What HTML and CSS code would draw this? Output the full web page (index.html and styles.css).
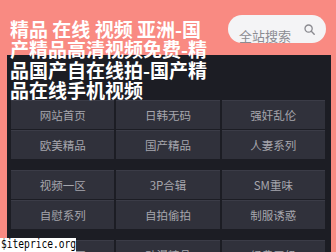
FILE: index.html
```html
<!DOCTYPE html>
<html lang="zh">
<head>
<meta charset="utf-8">
<title>精品 在线 视频</title>
<link rel="stylesheet" href="styles.css">
</head>
<body>
<div class="page">
  <header class="header">
    <h1 class="title">精品 在线 视频 亚洲-国产精品高清视频免费-精品国产自在线拍-国产精品在线手机视频</h1>
    <div class="search">
      <span class="search-text">全站搜索</span>
      <svg class="search-icon" width="11" height="11" viewBox="0 0 11 11"><circle cx="4.6" cy="4.6" r="3.6" fill="none" stroke="#8a8a90" stroke-width="1.3"/><line x1="7.3" y1="7.3" x2="10.2" y2="10.2" stroke="#8a8a90" stroke-width="1.4" stroke-linecap="round"/></svg>
    </div>
  </header>
  <main class="panel">
    <nav class="group">
      <a class="cell">网站首页</a>
      <a class="cell">日韩无码</a>
      <a class="cell">强奸乱伦</a>
      <a class="cell">欧美精品</a>
      <a class="cell">国产精品</a>
      <a class="cell">人妻系列</a>
    </nav>
    <nav class="group">
      <a class="cell">视频一区</a>
      <a class="cell">3P合辑</a>
      <a class="cell">SM重味</a>
      <a class="cell">自慰系列</a>
      <a class="cell">自拍偷拍</a>
      <a class="cell">制服诱惑</a>
    </nav>
    <nav class="group group-last">
      <a class="cell">视频二区</a>
      <a class="cell">动漫精品</a>
      <a class="cell">经典三级</a>
    </nav>
  </main>
</div>
<div class="watermark"><span class="watermark-text">$iteprice.org</span></div>
</body>
</html>
```
FILE: styles.css
```css
html, body {
  margin: 0;
  padding: 0;
  background: #f98a82;
  overflow: hidden;
  height: 252px;
}
body {
  font-family: "Noto Sans CJK SC", "Noto Sans", sans-serif;
}
.page {
  padding: 0 5px 0 7px;
}
.header {
  display: flex;
  justify-content: space-between;
  align-items: flex-start;
  height: 55px;
}
.title {
  margin: 0 0 0 3px;
  padding-top: 19px;
  width: 200px;
  font-size: 19px;
  line-height: 20.3px;
  font-weight: 700;
  color: #ffffff;
  position: relative;
  z-index: 1;
}
.search {
  margin-top: 15px;
  margin-right: 5px;
  width: 98px;
  height: 28px;
  border-radius: 14px;
  background: #f4f4f6;
  display: flex;
  align-items: flex-end;
  justify-content: space-between;
  box-sizing: border-box;
  padding: 0 11px 0 11px;
}
.search-text {
  font-size: 13px;
  color: #8c8c92;
  line-height: 16px;
  transform: translateY(1px);
}
.search-icon {
  align-self: center;
}
.panel {
  background: #1c1d24;
  padding: 45px 6px 10px 4px;
  height: 200px;
}
.group {
  display: grid;
  grid-template-columns: repeat(3, 1fr);
  grid-auto-rows: 29px;
  column-gap: 2px;
  row-gap: 1px;
  margin-bottom: 11px;
}
.group-last {
  margin-top: 10px;
}
.cell {
  background: #30313b;
  border-top: 1px solid #3b3c47;
  display: flex;
  align-items: center;
  justify-content: center;
  font-size: 11.5px;
  color: #a6a6ad;
}
.watermark {
  position: absolute;
  left: 0;
  top: 238px;
  width: 76px;
  height: 14px;
  background: #ffffff;
  color: #000000;
  font-family: "DejaVu Sans Mono", monospace;
  font-size: 9.6px;
  line-height: 14px;
  padding-left: 1px;
  box-sizing: border-box;
  z-index: 2;
}
.watermark-text {
  display: inline-block;
  transform: scaleY(1.3);
  transform-origin: 0 60%;
}
```
